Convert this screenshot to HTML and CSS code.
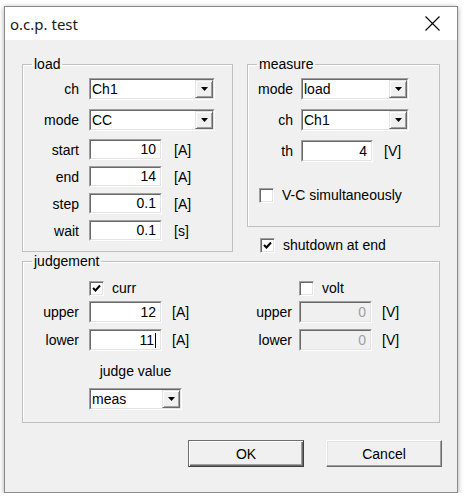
FILE: index.html
```html
<!DOCTYPE html>
<html>
<head>
<meta charset="utf-8">
<title>o.c.p. test</title>
<link rel="stylesheet" href="styles.css">
</head>
<body>
<div class="win">
  <div class="titlebar">
    <span class="title">o.c.p. test</span>
    <svg class="close" viewBox="0 0 15 15" width="15" height="15"><path d="M0.5 0.5L14.5 14.5M14.5 0.5L0.5 14.5" stroke="#000" stroke-width="1.1" fill="none"/></svg>
  </div>
  <div class="content">
    <div class="top">
      <fieldset class="group load">
        <legend>load</legend>
        <div class="row"><span class="lbl">ch</span>
          <div class="sunk combo w126"><div class="in"><span class="val">Ch1</span><span class="drop"><svg viewBox="0 0 7 4" width="7" height="4"><path d="M0 0H7L3.5 4Z" fill="#000"/></svg></span></div></div>
        </div>
        <div class="row m9"><span class="lbl">mode</span>
          <div class="sunk combo w126"><div class="in"><span class="val">CC</span><span class="drop"><svg viewBox="0 0 7 4" width="7" height="4"><path d="M0 0H7L3.5 4Z" fill="#000"/></svg></span></div></div>
        </div>
        <div class="row m8"><span class="lbl">start</span>
          <div class="sunk field w73"><div class="in">10</div></div><span class="unit">[A]</span>
        </div>
        <div class="row m6"><span class="lbl">end</span>
          <div class="sunk field w73"><div class="in">14</div></div><span class="unit">[A]</span>
        </div>
        <div class="row m6"><span class="lbl">step</span>
          <div class="sunk field w73"><div class="in">0.1</div></div><span class="unit">[A]</span>
        </div>
        <div class="row m6"><span class="lbl">wait</span>
          <div class="sunk field w73"><div class="in">0.1</div></div><span class="unit">[s]</span>
        </div>
      </fieldset>
      <div class="rightcol">
        <fieldset class="group measure">
          <legend>measure</legend>
          <div class="row"><span class="lbl">mode</span>
            <div class="sunk combo w108"><div class="in"><span class="val">load</span><span class="drop"><svg viewBox="0 0 7 4" width="7" height="4"><path d="M0 0H7L3.5 4Z" fill="#000"/></svg></span></div></div>
          </div>
          <div class="row m9"><span class="lbl">ch</span>
            <div class="sunk combo w108"><div class="in"><span class="val">Ch1</span><span class="drop"><svg viewBox="0 0 7 4" width="7" height="4"><path d="M0 0H7L3.5 4Z" fill="#000"/></svg></span></div></div>
          </div>
          <div class="row m9"><span class="lbl">th</span>
            <div class="sunk field w72 h22"><div class="in">4</div></div><span class="unit">[V]</span>
          </div>
          <div class="check vc"><span class="box"></span><span>V-C simultaneously</span></div>
        </fieldset>
        <div class="check shut"><span class="box"><svg viewBox="0 0 11 11" width="11" height="11"><path d="M2 5L4.5 7.5L9 2.5" stroke="#000" stroke-width="2" fill="none"/></svg></span><span>shutdown at end</span></div>
      </div>
    </div>
    <fieldset class="group judge">
      <legend>judgement</legend>
      <div class="jcols">
        <div class="jleft">
          <div class="check jc"><span class="box"><svg viewBox="0 0 11 11" width="11" height="11"><path d="M2 5L4.5 7.5L9 2.5" stroke="#000" stroke-width="2" fill="none"/></svg></span><span>curr</span></div>
          <div class="row m5"><span class="lbl">upper</span>
            <div class="sunk field w73 h22"><div class="in">12</div></div><span class="unit u10">[A]</span>
          </div>
          <div class="row m6"><span class="lbl">lower</span>
            <div class="sunk field w73 h22"><div class="in">11<span class="caret"></span></div></div><span class="unit u10">[A]</span>
          </div>
          <div class="jv">judge value</div>
          <div class="sunk combo w93 jvc"><div class="in"><span class="val">meas</span><span class="drop"><svg viewBox="0 0 7 4" width="7" height="4"><path d="M0 0H7L3.5 4Z" fill="#000"/></svg></span></div></div>
        </div>
        <div class="jright">
          <div class="check jc2"><span class="box"></span><span>volt</span></div>
          <div class="row m5"><span class="lbl2">upper</span>
            <div class="sunk field w73 h22 dis"><div class="in">0</div></div><span class="unit u10">[V]</span>
          </div>
          <div class="row m6"><span class="lbl2">lower</span>
            <div class="sunk field w73 h22 dis"><div class="in">0</div></div><span class="unit u10">[V]</span>
          </div>
        </div>
      </div>
    </fieldset>
    <div class="buttons">
      <div class="btn def">OK</div>
      <div class="btn">Cancel</div>
    </div>
  </div>
</div>
</body>
</html>
```
FILE: styles.css
```css
body {
  margin: 0;
  background: #ffffff;
  font-family: "Liberation Sans", Arial, sans-serif;
  font-size: 14px;
  color: #000;
}
.win {
  margin: 6px 0 0 4px;
  width: 454px;
  height: 487px;
  box-sizing: border-box;
  border: 1px solid #8a8a8a;
  background: #f0f0f0;
  box-shadow: 0 1px 5px rgba(0,0,0,0.35);
  display: flex;
  flex-direction: column;
}
.titlebar {
  height: 33px;
  flex: none;
  background: #fff;
  display: flex;
  align-items: center;
  padding: 0 17px 0 5px;
}
.title {
  flex: 1;
  font-family: "Noto Sans", "Open Sans", sans-serif;
  font-size: 15px;
  color: #1a1a1a;
}
.close { display: block; }
.content {
  padding: 16px 15px 0 17px;
}
.top {
  display: flex;
  gap: 14px;
  align-items: flex-start;
  height: 197px;
}
fieldset.group {
  margin: 0;
  border: 1px solid #c0c0c0;
  box-shadow: inset 1px 1px 0 #fff;
  box-sizing: border-box;
  min-width: 0;
}
fieldset.group legend {
  padding: 0 2px;
  margin-left: -1px;
  height: 16px;
  line-height: 16px;
  font-size: 14px;
}
.load {
  width: 211px;
  height: 196px;
  padding: 6px 10px 0 10px;
}
.rightcol {
  width: 193px;
}
.measure {
  width: 193px;
  height: 171px;
  padding: 6px 10px 0 10px;
}
.row {
  display: flex;
  align-items: center;
}
.m5 { margin-top: 5px; }
.m6 { margin-top: 6px; }
.m8 { margin-top: 8px; }
.m9 { margin-top: 9px; }
.lbl {
  width: 46px;
  margin-right: 10px;
  text-align: right;
  flex: none;
}
.measure .lbl {
  width: 35px;
  margin-right: 8px;
}
.lbl2 {
  width: 36px;
  margin-right: 7px;
  text-align: right;
  flex: none;
}
.unit {
  margin-left: 12px;
}
.measure .unit { margin-left: 11px; }
.unit.u10 { margin-left: 10px; }

.sunk {
  border: 1px solid;
  border-color: #a0a0a0 #ffffff #ffffff #a0a0a0;
  box-sizing: border-box;
  background: #fff;
  flex: none;
}
.sunk > .in {
  border: 1px solid;
  border-color: #696969 #e3e3e3 #e3e3e3 #696969;
  box-sizing: border-box;
  height: 100%;
}
.combo { height: 22px; }
.combo > .in {
  display: flex;
  align-items: center;
}
.combo .val {
  flex: 1;
  padding-left: 1px;
  line-height: 16px;
}
.drop {
  width: 18px;
  height: 100%;
  box-sizing: border-box;
  background: #f0f0f0;
  border: 1px solid;
  border-color: #e3e3e3 #696969 #696969 #e3e3e3;
  box-shadow: inset 1px 1px 0 #fff, inset -1px -1px 0 #a0a0a0;
  display: flex;
  align-items: center;
  justify-content: center;
}
.drop svg { display: block; }
.w126 { width: 126px; }
.w108 { width: 108px; }
.w93 { width: 93px; }
.w73 { width: 73px; }
.w72 { width: 72px; }
.field { height: 21px; }
.field.h22 { height: 22px; }
.field > .in {
  text-align: right;
  padding-right: 4px;
  line-height: 17px;
}
.field.h22 > .in { line-height: 18px; }
.field.dis { background: #f0f0f0; }
.field.dis > .in { color: #a0a0a0; }
.caret {
  display: inline-block;
  width: 1px;
  height: 15px;
  background: #000;
  vertical-align: -3px;
  margin-left: 1px;
}

.check {
  display: flex;
  align-items: center;
  height: 15px;
  line-height: 15px;
}
.check .box {
  width: 15px;
  height: 15px;
  box-sizing: border-box;
  background: #fff;
  border: 1px solid;
  border-color: #a0a0a0 #fff #fff #a0a0a0;
  box-shadow: inset 1px 1px 0 #696969, inset -1px -1px 0 #e3e3e3;
  margin-right: 8px;
  display: flex;
  align-items: center;
  justify-content: center;
  flex: none;
}
.check .box svg { display: block; }
.vc { margin-top: 26px; margin-left: 1px; }
.shut { margin-top: 11px; margin-left: 13px; }

.judge {
  width: 418px;
  height: 170px;
  margin-top: 9px;
  padding: 12px 10px 0 10px;
}
.jcols { display: flex; }
.jleft { width: 223px; }
.jc { margin-left: 56px; }
.jc2 { margin-left: 43px; }
.jv {
  margin-top: 12px;
  margin-left: 56px;
  width: 93px;
  text-align: center;
  line-height: 16px;
}
.jvc { margin-top: 9px; margin-left: 56px; }

.buttons {
  display: flex;
  justify-content: flex-end;
  gap: 22px;
  margin-top: 17px;
}
.btn {
  width: 116px;
  height: 27px;
  box-sizing: border-box;
  background: #f0f0f0;
  border: 1px solid;
  border-color: #fff #696969 #696969 #fff;
  box-shadow: inset -1px -1px 0 #a0a0a0, inset 1px 1px 0 #e3e3e3;
  display: flex;
  align-items: center;
  justify-content: center;
}
.btn.def {
  border-color: #6e6e6e #404040 #404040 #6e6e6e;
  box-shadow: inset 1px 1px 0 #fff, inset -1px -1px 0 #696969, inset -2px -2px 0 #a0a0a0;
}
```
